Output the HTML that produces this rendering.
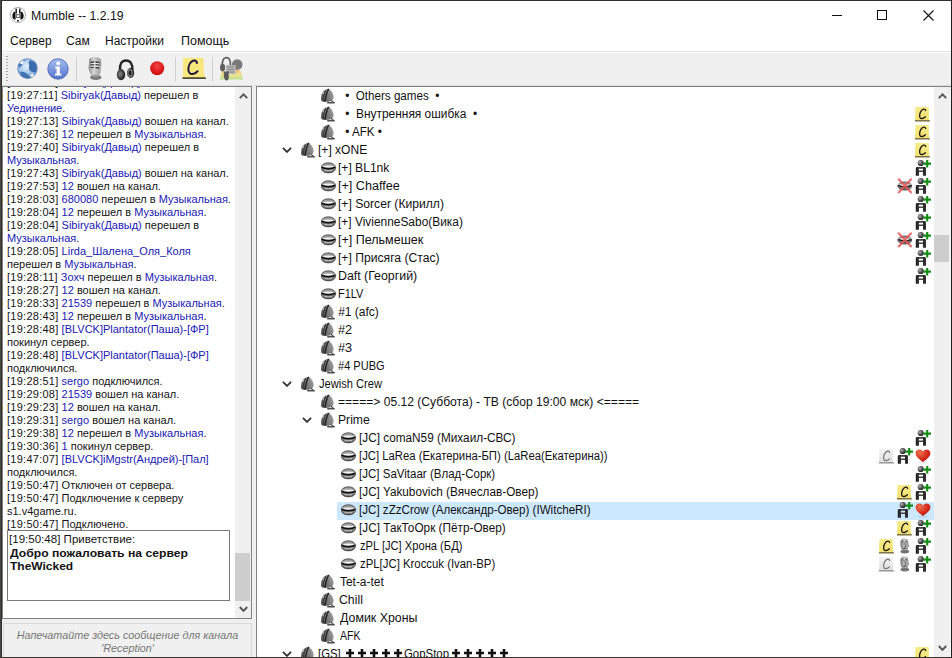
<!DOCTYPE html>
<html><head><meta charset="utf-8">
<style>
*{margin:0;padding:0;box-sizing:border-box}
html,body{width:952px;height:658px;overflow:hidden;background:#fff;font-family:"Liberation Sans",sans-serif;color:#000}
.a{position:absolute}
.i{position:absolute;overflow:visible}
.cl{position:absolute;left:7px;white-space:pre;font-size:11px;line-height:13px;color:#141414;transform-origin:0 0}
.ts{letter-spacing:0.26px}
.u{font-weight:normal;color:#2020b4}
.tt{position:absolute;white-space:pre;font-size:12px;line-height:18px;color:#111;transform-origin:0 0}
.hl{position:absolute;left:337px;width:597px;height:18px;background:#cce8ff}
.menu{position:absolute;top:31px;font-size:12px;line-height:20px;color:#111}
</style></head><body>

<svg width="0" height="0" style="position:absolute">
<defs>
 <linearGradient id="gch" x1="1" y1="0.3" x2="0" y2="0.8"><stop offset="0" stop-color="#a0a0a0"/><stop offset=".5" stop-color="#7a7a7a"/><stop offset="1" stop-color="#4e4e4e"/></linearGradient>
 <linearGradient id="glip" x1="0" y1="0" x2="0" y2="1"><stop offset="0" stop-color="#5a5a5a"/><stop offset=".3" stop-color="#a8a8a8"/><stop offset=".7" stop-color="#7a7a7a"/><stop offset="1" stop-color="#4a4a4a"/></linearGradient>
 <linearGradient id="gcy" x1="0" y1="0" x2="0" y2="1"><stop offset="0" stop-color="#f6ec8a"/><stop offset="1" stop-color="#f2e070"/></linearGradient>
 <linearGradient id="gcg" x1="0" y1="0" x2="0" y2="1"><stop offset="0" stop-color="#f2f2f2"/><stop offset="1" stop-color="#dedede"/></linearGradient>
 <radialGradient id="ghe" cx=".3" cy=".25" r=".9"><stop offset="0" stop-color="#f07050"/><stop offset=".6" stop-color="#d42a1a"/><stop offset="1" stop-color="#b01010"/></radialGradient>
 <radialGradient id="ghead" cx=".35" cy=".35" r=".7"><stop offset="0" stop-color="#b0b0b0"/><stop offset=".6" stop-color="#505050"/><stop offset="1" stop-color="#1a1a1a"/></radialGradient>
 <linearGradient id="gbody" x1="0" y1="0" x2="1" y2="0"><stop offset="0" stop-color="#1a1a1a"/><stop offset=".5" stop-color="#4a4a4a"/><stop offset="1" stop-color="#1a1a1a"/></linearGradient>
 <linearGradient id="gmo" x1="0" y1="0" x2="1" y2="0"><stop offset="0" stop-color="#707070"/><stop offset=".5" stop-color="#cacaca"/><stop offset="1" stop-color="#8a8a8a"/></linearGradient>
 <symbol id="ch" viewBox="0 0 16 16">
  <path d="M7.8 0.5 C10 2.5 12.4 5.5 12.6 8.4 C12.6 10.4 11.8 12 10.4 12.8 C8.4 13.8 5.6 14 3.6 13.9 C2 13.8 0.6 13.4 0.2 12.6 C-0.1 10 0.2 6.8 1.4 4.4 C3 2.2 5.6 0.8 7.8 0.5Z" fill="url(#gch)"/>
  <path d="M4.8 2.4 C3.2 5 2.4 8.6 2.2 12.8" stroke="#3c3c3c" stroke-width="1.1" fill="none"/>
  <path d="M7.6 1 C6 4 4.8 8 4 13.4" stroke="#1e1e1e" stroke-width="1.4" fill="none"/>
  <circle cx="2" cy="4.8" r="1.1" fill="#d8d8d8" opacity=".75"/>
  <path d="M10 12.2 L12.4 14.4" stroke="#5a5a5a" stroke-width="1.2"/>
  <rect x="6.2" y="13.9" width="7.6" height="1.6" fill="#505050"/>
 </symbol>
 <symbol id="lips" viewBox="0 0 16 16">
  <path d="M0 6.9 C0.6 3.6 3 1.8 7.4 1.8 C11.8 1.8 14.2 3.6 14.8 6.9 C14.2 10.2 11.8 11.9 7.4 11.9 C3 11.9 0.6 10.2 0 6.9Z" fill="url(#glip)" stroke="#444" stroke-width=".6"/>
  <path d="M2 5 Q7.4 3.9 12.8 5 Q12 6.6 7.4 6.6 Q2.8 6.6 2 5Z" fill="#f2f2f2"/>
  <path d="M0.3 6.5 Q2 6.3 3.4 7.3 Q7.4 8.2 11.4 7.3 Q12.8 6.3 14.5 6.5" stroke="#101010" stroke-width="1.5" fill="none"/>
  <path d="M3.6 9.6 Q7.4 10.2 11.2 9.6" stroke="#cfcfcf" stroke-width="1" fill="none"/>
  <path d="M3.8 3.3 Q7.4 2.8 11 3.3" stroke="#b4b4b4" stroke-width=".8" fill="none"/>
 </symbol>
 <symbol id="cy" viewBox="0 0 16 16">
  <path d="M0.4 0.9 H13.8 L14 13.4 L15 15.2 H0 Z" fill="url(#gcy)"/>
  <path d="M0 14 H14.4 L15.2 15.4 H0Z" fill="#7c7650"/>
  <path d="M10.6 4.6 C10.6 2.8 8.6 2.6 7 4 C5 5.8 4 9.6 5 11.6 C6 13.2 8.6 12.6 10.4 10.8" stroke="#231c14" stroke-width="1.35" fill="none" stroke-linecap="round"/>
 </symbol>
 <symbol id="cg" viewBox="0 0 16 16">
  <path d="M0.4 0.9 H13.8 L14 13.4 L15 15.2 H0 Z" fill="url(#gcg)"/>
  <path d="M0 14 H14.4 L15.2 15.4 H0Z" fill="#9a9a9a"/>
  <path d="M10.6 4.6 C10.6 2.8 8.6 2.6 7 4 C5 5.8 4 9.6 5 11.6 C6 13.2 8.6 12.6 10.4 10.8" stroke="#6e6e6e" stroke-width="1.1" fill="none" stroke-linecap="round"/>
 </symbol>
 <symbol id="au" viewBox="0 0 16 16">
  <circle cx="5.7" cy="3" r="3.1" fill="url(#ghead)"/>
  <path d="M0.8 15.8 V8.4 Q0.8 7 2.2 7 H9.4 Q10.9 7 10.9 8.4 V15.8 H8 V12 H4 V15.8Z M3.8 8.8 V10.6 H8 V8.8Z" fill="url(#gbody)" fill-rule="evenodd"/>
  <path d="M12.2 -0.2 V7.6 M8.4 3.6 H16" stroke="#128c12" stroke-width="2.1"/>
 </symbol>
 <symbol id="he" viewBox="0 0 16 16">
  <ellipse cx="8" cy="14.6" rx="5" ry="1.2" fill="#000" opacity=".08"/>
  <path d="M8 14 C5.2 11.6 0.6 9 0.6 5.2 C0.6 2.8 2.4 1.4 4.4 1.4 C6 1.4 7.2 2.2 8 3.4 C8.8 2.2 10 1.4 11.6 1.4 C13.6 1.4 15.4 2.8 15.4 5.2 C15.4 9 10.8 11.6 8 14Z" fill="url(#ghe)"/>
 </symbol>
 <symbol id="mo" viewBox="0 0 16 16">
  <path d="M3.4 3.4 Q4 0.8 7.4 0.6 Q10.6 0.6 11 2.6 L11.4 5 L12 8.6 L11 9.6 L10.8 12 H5 Q3.8 10.4 3.6 8Z" fill="url(#gmo)"/>
  <path d="M5.2 3.6 L6.6 4.2 M8.4 3.6 L10.6 4 M7.8 4.4 L8.6 9 L7 9.6 M5.8 10.6 H9.6" stroke="#555" stroke-width=".9" fill="none"/>
  <ellipse cx="7.8" cy="13.6" rx="4.4" ry="1.9" fill="#737373"/>
 </symbol>
 <symbol id="xl" viewBox="0 0 16 16">
  <ellipse cx="7.8" cy="8" rx="7.4" ry="4.6" fill="url(#glip)"/>
  <path d="M2.8 6.6 Q7.8 5.4 12.8 6.6 Q11.8 8.2 7.8 8.2 Q3.8 8.2 2.8 6.6Z" fill="#f2f2f2"/>
  <path d="M0.6 8 Q3 7.6 4.6 8.6 Q7.8 9.4 11 8.6 Q12.6 7.6 15 8" stroke="#0e0e0e" stroke-width="1.2" fill="none"/>
  <path d="M1.2 0.8 L14.6 15 M14.6 0.8 L1.2 15" stroke="#e85454" stroke-width="2.2" opacity=".85"/>
 </symbol>
 <symbol id="chev" viewBox="0 0 10 6">
  <path d="M0.9 0.8 L5 4.9 L9.1 0.8" stroke="#333" stroke-width="1.8" fill="none"/>
 </symbol>
 <symbol id="cross" viewBox="0 0 8 8">
  <path d="M4 0 V8 M0 4 H8" stroke="#111" stroke-width="2.6"/>
 </symbol>
</defs></svg>

<!-- window frame -->
<div class="a" style="left:0;top:0;width:952px;height:658px;border-top:1px solid #2b2b2b;border-left:2px solid #2b2b2b;border-right:1px solid #2b2b2b;border-bottom:1px solid #2b2b2b"></div>
<!-- title -->
<svg class="i" style="left:10px;top:7px" width="16" height="16" viewBox="0 0 16 16">
 <circle cx="8" cy="8" r="7.6" fill="#fff" stroke="#9a9a9a" stroke-width=".8"/>
 <path d="M2.6 11 Q2 7 3.6 5 L5.4 4.4 L5.6 12.8 Q3.6 12.6 2.6 11Z" fill="#111"/>
 <path d="M13.4 11 Q14 7 12.4 5 L10.6 4.4 L10.4 12.8 Q12.4 12.6 13.4 11Z" fill="#111"/>
 <path d="M5.4 1.6 L6.8 1.6 L7 6.6 L5.6 6.6Z M9.2 1.6 L10.6 1.6 L10.4 6.6 L9 6.6Z" fill="#111"/>
 <path d="M6.4 7.6 H9.8 V10.6 H6.4Z" fill="none" stroke="#333" stroke-width=".8"/>
 <path d="M7 13 H9 V14.4 H7Z" fill="#222"/>
</svg>
<div class="a" style="left:31px;top:9px;font-size:12px;line-height:15px;color:#111;transform:scaleX(1.02);transform-origin:0 0">Mumble -- 1.2.19</div>
<div class="a" style="left:832px;top:15px;width:10px;height:1px;background:#111"></div>
<div class="a" style="left:877px;top:10px;width:10px;height:10px;border:1px solid #111"></div>
<svg class="i" style="left:923px;top:10px" width="11" height="11"><path d="M0.5 0.5 L10.5 10.5 M10.5 0.5 L0.5 10.5" stroke="#111" stroke-width="1.1"/></svg>
<!-- menu -->
<div class="menu" style="left:10px">Сервер</div>
<div class="menu" style="left:66px">Сам</div>
<div class="menu" style="left:105px">Настройки</div>
<div class="menu" style="left:180.5px;transform:scaleX(1.04);transform-origin:0 0">Помощь</div>
<!-- toolbar -->
<div class="a" style="left:2px;top:51px;width:949px;height:35px;background:#f0f0f0;border-top:1px solid #e4e4e4;box-shadow:inset 0 1px 0 #fff"></div>
<div class="a" style="left:2px;top:85px;width:949px;height:1px;background:#dedede"></div>
<div class="a" style="left:6px;top:56px;width:2px;height:26px;background:repeating-linear-gradient(#a8a8a8 0 1px,transparent 1px 3px)"></div>
<div class="a" style="left:76px;top:57px;width:1px;height:24px;background:#cfcfcf"></div>
<div class="a" style="left:175px;top:57px;width:1px;height:24px;background:#cfcfcf"></div>
<div class="a" style="left:212px;top:57px;width:1px;height:24px;background:#cfcfcf"></div>

<svg class="i" style="left:17px;top:58px" width="21" height="21" viewBox="0 0 20.5 20.5">
 <defs><radialGradient id="gglobe" cx=".45" cy=".4" r=".65"><stop offset="0" stop-color="#e4f2ff"/><stop offset=".6" stop-color="#9cc0e6"/><stop offset="1" stop-color="#5a86c0"/></radialGradient></defs>
 <circle cx="10.2" cy="10.2" r="9.8" fill="url(#gglobe)"/>
 <path d="M12 2.5 Q16 2.2 19 6 Q20 10 18.5 13.5 Q15.5 14.5 12.5 12.5 Q11 10 12 7 Q11 4.5 12 2.5Z" fill="#3a6cae"/>
 <path d="M3 13.5 Q6 13 9 14.8 Q12 16.5 13 19.6 Q8.5 20.6 5 18.2 Q3 16 3 13.5Z" fill="#4072b2"/>
 <path d="M1 6.5 Q3 4.5 5.5 5.5 Q5 8.5 2.2 9.5 Q0.8 8.5 1 6.5Z" fill="#4a7cbc"/>
 <path d="M6 2 Q8.5 1 10 1.2 Q9 2.8 6.8 3.2Z" fill="#6a94c8"/>
 <circle cx="4.6" cy="4.4" r="1.5" fill="#fff" opacity=".95"/>
 <circle cx="15" cy="17" r="1.6" fill="#fff" opacity=".95"/>
 <circle cx="10.2" cy="10.2" r="9.6" fill="none" stroke="#5a7eb0" stroke-width=".7" opacity=".8"/>
</svg>
<svg class="i" style="left:47px;top:58px" width="22" height="22" viewBox="0 0 22 22">
 <defs><linearGradient id="ginfo" x1="0" y1="0" x2="0" y2="1"><stop offset="0" stop-color="#a6bef2"/><stop offset="1" stop-color="#5472cc"/></linearGradient></defs>
 <circle cx="11" cy="11" r="10.2" fill="url(#ginfo)" stroke="#4c66b6" stroke-width=".9"/>
 <circle cx="11.2" cy="5.4" r="1.9" fill="#fff"/>
 <path d="M8.2 8.6 H12.8 V15.8 H14.4 V17.6 H8 V15.8 H9.6 V10.4 H8.2Z" fill="#fff"/>
</svg>
<svg class="i" style="left:86px;top:56px" width="18" height="25" viewBox="0 0 18 25">
 <defs><linearGradient id="gmic" x1="0" y1="0" x2="1" y2="0"><stop offset="0" stop-color="#8a8a8a"/><stop offset=".4" stop-color="#d6d6d6"/><stop offset="1" stop-color="#9a9a9a"/></linearGradient></defs>
 <path d="M3 3.5 Q3.5 1 8.5 1 Q14 1.2 15 3.6 L15.4 8 L14.2 18 Q13 19.6 9 19.6 Q5 19.6 4.2 18 L2.4 12 L3 8Z" fill="url(#gmic)"/>
 <path d="M4.5 6.5 L8 6 M9.5 6 L13.5 6.6 M4.5 9 L8 8.6 M9.5 8.6 L13.5 9.2 M4.8 11.6 L8 11.2 M9.5 11.4 L13 12" stroke="#3a3a3a" stroke-width="1.3"/>
 <path d="M5.2 7.6 H13 M5.2 10.2 H13" stroke="#f4f4f4" stroke-width=".8"/>
 <ellipse cx="9.8" cy="21.4" rx="5.6" ry="2.6" fill="#7c7c7c"/>
 <path d="M7 19 H12.5 V21 H7Z" fill="#9a9a9a"/>
</svg>
<svg class="i" style="left:116px;top:59px" width="20" height="23" viewBox="0 0 20 23">
 <defs><radialGradient id="gcup" cx=".4" cy=".45" r=".6"><stop offset="0" stop-color="#8a8a8a"/><stop offset="1" stop-color="#141414"/></radialGradient></defs>
 <path d="M4 11 Q3.5 1.5 10 1.5 Q16.6 1.5 16.4 11" stroke="#262626" stroke-width="2.4" fill="none"/>
 <ellipse cx="5" cy="15.6" rx="4.2" ry="5.6" fill="url(#gcup)"/>
 <ellipse cx="14.6" cy="14" rx="3.6" ry="4.9" fill="#2a2a2a"/>
 <ellipse cx="14" cy="14" rx="2.6" ry="4" fill="#8a8a8a"/>
 <ellipse cx="14" cy="14" rx="1.5" ry="2.8" fill="#1e1e1e"/>
</svg>
<svg class="i" style="left:150px;top:61px" width="15" height="15" viewBox="0 0 15 15">
 <defs><radialGradient id="grec" cx=".5" cy=".35" r=".65"><stop offset="0" stop-color="#f04848"/><stop offset=".6" stop-color="#e01c1c"/><stop offset="1" stop-color="#c41010"/></radialGradient></defs>
 <circle cx="7.2" cy="7.3" r="7" fill="url(#grec)"/>
</svg>
<svg class="i" style="left:182px;top:57px" width="25" height="23" viewBox="0 0 25 23">
 <path d="M1.1 1 H21.5 L21.8 16 L24 21.6 H0.5 L1.1 16Z" fill="#f8e77c"/>
 <path d="M0.5 20.2 H23.4 L24.2 22 H0.5Z" fill="#4c4a38"/>
 <path d="M15 6 C14.6 3.6 12.6 3.2 11 3.8 C8 5 6.2 9 6.4 13 C6.6 16 8.6 17.2 10.4 17 C12.4 16.8 14.6 15.6 15.6 14.2" stroke="#1a1440" stroke-width="2" fill="none" stroke-linecap="round"/>
</svg>
<svg class="i" style="left:219px;top:56px" width="25" height="26" viewBox="0 0 25 26">
 <defs><linearGradient id="gmt" x1="0" y1="0" x2="0" y2="1"><stop offset="0" stop-color="#f0a060"/><stop offset=".6" stop-color="#ece080"/><stop offset="1" stop-color="#b0dc80"/></linearGradient></defs>
 <path d="M0.5 23.5 L3.5 13 L7 17 L12 19 L18 12 L22 16 L24 23.5Z" fill="url(#gmt)" opacity=".85"/>
 <circle cx="18.2" cy="8.5" r="5.3" fill="#7a7a7a"/>
 <path d="M3.4 11 Q2.6 2 7.2 1.6 Q11.6 1.4 11.4 9" stroke="#5a5a5a" stroke-width="1.6" fill="none"/>
 <ellipse cx="3.6" cy="11.6" rx="2.6" ry="3.8" fill="#5e5e5e"/>
 <rect x="7" y="9" width="9.6" height="9" fill="#b4b4b4"/>
 <path d="M8.6 11 H15 M8.6 13.5 H15 M8.6 16 H15" stroke="#8a8a8a" stroke-width="1"/>
 <path d="M5 15.4 Q4.4 19 5.2 22 Q6 24.6 7.6 24.6 Q9.6 24.4 9.8 21.6 L9.6 15.4Z" fill="#5a5a5a"/>
</svg>

<!-- chat panel -->
<div class="a" style="left:2px;top:86px;width:250px;height:533px;background:#fff;border:1px solid #828282;overflow:hidden">
</div>
<div class="a" style="left:3px;top:87px;width:232px;height:531px;overflow:hidden">
<div style="position:absolute;left:-3px;top:-87px;width:300px;height:700px">
<div class="cl" style="top:76px"><span class="ts">[19:27:05]</span> <b class="u">Sibiryak(Давыд)</b> вошел на канал.</div>
<div class="cl" style="top:89px"><span class="ts">[19:27:11]</span> <b class="u">Sibiryak(Давыд)</b> перешел в</div>
<div class="cl" style="top:102px"><b class="u">Уединение</b>.</div>
<div class="cl" style="top:115px"><span class="ts">[19:27:13]</span> <b class="u">Sibiryak(Давыд)</b> вошел на канал.</div>
<div class="cl" style="top:128px"><span class="ts">[19:27:36]</span> <b class="u">12</b> перешел в <b class="u">Музыкальная</b>.</div>
<div class="cl" style="top:141px"><span class="ts">[19:27:40]</span> <b class="u">Sibiryak(Давыд)</b> перешел в</div>
<div class="cl" style="top:154px"><b class="u">Музыкальная</b>.</div>
<div class="cl" style="top:167px"><span class="ts">[19:27:43]</span> <b class="u">Sibiryak(Давыд)</b> вошел на канал.</div>
<div class="cl" style="top:180px"><span class="ts">[19:27:53]</span> <b class="u">12</b> вошел на канал.</div>
<div class="cl" style="top:193px"><span class="ts">[19:28:03]</span> <b class="u">680080</b> перешел в <b class="u">Музыкальная</b>.</div>
<div class="cl" style="top:206px"><span class="ts">[19:28:04]</span> <b class="u">12</b> перешел в <b class="u">Музыкальная</b>.</div>
<div class="cl" style="top:219px"><span class="ts">[19:28:04]</span> <b class="u">Sibiryak(Давыд)</b> перешел в</div>
<div class="cl" style="top:232px"><b class="u">Музыкальная</b>.</div>
<div class="cl" style="top:245px"><span class="ts">[19:28:05]</span> <b class="u">Lirda_Шалена_Оля_Коля</b></div>
<div class="cl" style="top:258px">перешел в <b class="u">Музыкальная</b>.</div>
<div class="cl" style="top:271px"><span class="ts">[19:28:11]</span> <b class="u">Зохч</b> перешел в <b class="u">Музыкальная</b>.</div>
<div class="cl" style="top:284px"><span class="ts">[19:28:27]</span> <b class="u">12</b> вошел на канал.</div>
<div class="cl" style="top:297px"><span class="ts">[19:28:33]</span> <b class="u">21539</b> перешел в <b class="u">Музыкальная</b>.</div>
<div class="cl" style="top:310px"><span class="ts">[19:28:43]</span> <b class="u">12</b> перешел в <b class="u">Музыкальная</b>.</div>
<div class="cl" style="top:323px"><span class="ts">[19:28:48]</span> <b class="u">[BLVCK]Plantator(Паша)-[ФР]</b></div>
<div class="cl" style="top:336px">покинул сервер.</div>
<div class="cl" style="top:349px"><span class="ts">[19:28:48]</span> <b class="u">[BLVCK]Plantator(Паша)-[ФР]</b></div>
<div class="cl" style="top:362px">подключился.</div>
<div class="cl" style="top:375px"><span class="ts">[19:28:51]</span> <b class="u">sergo</b> подключился.</div>
<div class="cl" style="top:388px"><span class="ts">[19:29:08]</span> <b class="u">21539</b> вошел на канал.</div>
<div class="cl" style="top:401px"><span class="ts">[19:29:23]</span> <b class="u">12</b> вошел на канал.</div>
<div class="cl" style="top:414px"><span class="ts">[19:29:31]</span> <b class="u">sergo</b> вошел на канал.</div>
<div class="cl" style="top:427px"><span class="ts">[19:29:38]</span> <b class="u">12</b> перешел в <b class="u">Музыкальная</b>.</div>
<div class="cl" style="top:440px"><span class="ts">[19:30:36]</span> <b class="u">1</b> покинул сервер.</div>
<div class="cl" style="top:453px"><span class="ts">[19:47:07]</span> <b class="u">[BLVCK]iMgstr(Андрей)-[Пал]</b></div>
<div class="cl" style="top:466px">подключился.</div>
<div class="cl" style="top:479px"><span class="ts">[19:50:47]</span> Отключен от сервера.</div>
<div class="cl" style="top:492px"><span class="ts">[19:50:47]</span> Подключение к серверу</div>
<div class="cl" style="top:505px">s1.v4game.ru.</div>
<div class="cl" style="top:518px"><span class="ts">[19:50:47]</span> Подключено.</div>
<div class="a" style="left:7px;top:530px;width:223px;height:71px;border:1px solid #7a7a7a;background:#fff"></div>
<div class="cl" style="left:8.5px;top:533px;transform:scaleX(1.05)">[19:50:48] Приветствие:</div>
<div class="cl" style="left:10px;top:547px;font-weight:bold;transform:scaleX(1.105)">Добро пожаловать на сервер</div>
<div class="cl" style="left:10px;top:560px;font-weight:bold;transform:scaleX(1.09)">TheWicked</div>
</div></div>
<!-- chat scrollbar -->
<div class="a" style="left:235px;top:87px;width:16px;height:531px;background:#f0f0f0"></div>
<div class="a" style="left:235px;top:553px;width:15px;height:48px;background:#cdcdcd"></div>
<svg class="i" style="left:239px;top:93px" width="9" height="6"><path d="M0.8 5.2 L4.5 1.4 L8.2 5.2" stroke="#555" stroke-width="1.9" fill="none"/></svg>
<svg class="i" style="left:239px;top:606px" width="9" height="6"><path d="M0.8 1 L4.5 4.8 L8.2 1" stroke="#555" stroke-width="1.9" fill="none"/></svg>
<!-- input box -->
<div class="a" style="left:2px;top:619px;width:250px;height:38px;background:#f0f0f0"></div>
<div class="a" style="left:3px;top:623px;width:249px;height:35px;border:1px solid #d9d9d9;border-bottom:none;background:#f0f0f0"></div>
<div class="a" style="left:3px;top:629px;width:249px;text-align:center;font-size:11px;line-height:13px;font-style:italic;color:#777;transform:scaleX(0.98)">Напечатайте здесь сообщение для канала<br>'Reception'</div>
<!-- splitter -->
<div class="a" style="left:252px;top:86px;width:4px;height:571px;background:#f0f0f0"></div>
<!-- tree panel -->
<div class="a" style="left:256px;top:86px;width:695px;height:571px;background:#fff;border-left:1px solid #828282;border-top:1px solid #828282"></div>
<div class="a" style="left:257px;top:87px;width:677px;height:570px;overflow:hidden">
<div style="position:absolute;left:-257px;top:-87px;width:952px;height:700px">
<svg class="i" style="left:321px;top:88px" width="16" height="16"><use href="#ch"/></svg>
<div class="tt" style="left:341.62px;top:87px;transform:scaleX(0.9688)"> •  Others games  •</div>
<svg class="i" style="left:321px;top:106px" width="16" height="16"><use href="#ch"/></svg>
<div class="tt" style="left:341.53px;top:105px;transform:scaleX(0.9917)"> •  Внутренняя ошибка  •</div>
<svg class="i" style="left:915px;top:106px" width="16" height="16"><use href="#cy"/></svg>
<svg class="i" style="left:321px;top:124px" width="16" height="16"><use href="#ch"/></svg>
<div class="tt" style="left:341.62px;top:123px;transform:scaleX(0.9703)"> • AFK •</div>
<svg class="i" style="left:915px;top:124px" width="16" height="16"><use href="#cy"/></svg>
<svg class="i" style="left:282px;top:147px" width="10" height="6"><use href="#chev"/></svg>
<svg class="i" style="left:301px;top:142px" width="16" height="16"><use href="#ch"/></svg>
<div class="tt" style="left:318.40px;top:141px;transform:scaleX(1.0042)">[+] xONE</div>
<svg class="i" style="left:915px;top:142px" width="16" height="16"><use href="#cy"/></svg>
<svg class="i" style="left:321px;top:161px" width="16" height="16"><use href="#lips"/></svg>
<div class="tt" style="left:338.19px;top:159px;transform:scaleX(1.0060)">[+] BL1nk</div>
<svg class="i" style="left:915px;top:160px" width="16" height="16"><use href="#au"/></svg>
<svg class="i" style="left:321px;top:179px" width="16" height="16"><use href="#lips"/></svg>
<div class="tt" style="left:338.15px;top:177px;transform:scaleX(1.0491)">[+] Chaffee</div>
<svg class="i" style="left:897px;top:178px" width="16" height="16"><use href="#xl"/></svg>
<svg class="i" style="left:915px;top:178px" width="16" height="16"><use href="#au"/></svg>
<svg class="i" style="left:321px;top:197px" width="16" height="16"><use href="#lips"/></svg>
<div class="tt" style="left:338.19px;top:195px;transform:scaleX(1.0117)">[+] Sorcer (Кирилл)</div>
<svg class="i" style="left:915px;top:196px" width="16" height="16"><use href="#au"/></svg>
<svg class="i" style="left:321px;top:215px" width="16" height="16"><use href="#lips"/></svg>
<div class="tt" style="left:338.21px;top:213px;transform:scaleX(0.9935)">[+] VivienneSabo(Вика)</div>
<svg class="i" style="left:915px;top:214px" width="16" height="16"><use href="#au"/></svg>
<svg class="i" style="left:321px;top:233px" width="16" height="16"><use href="#lips"/></svg>
<div class="tt" style="left:338.16px;top:231px;transform:scaleX(1.0432)">[+] Пельмешек</div>
<svg class="i" style="left:897px;top:232px" width="16" height="16"><use href="#xl"/></svg>
<svg class="i" style="left:915px;top:232px" width="16" height="16"><use href="#au"/></svg>
<svg class="i" style="left:321px;top:251px" width="16" height="16"><use href="#lips"/></svg>
<div class="tt" style="left:338.19px;top:249px;transform:scaleX(1.0121)">[+] Присяга (Стас)</div>
<svg class="i" style="left:915px;top:250px" width="16" height="16"><use href="#au"/></svg>
<svg class="i" style="left:321px;top:269px" width="16" height="16"><use href="#lips"/></svg>
<div class="tt" style="left:338.17px;top:267px;transform:scaleX(1.0307)">Daft (Георгий)</div>
<svg class="i" style="left:915px;top:268px" width="16" height="16"><use href="#au"/></svg>
<svg class="i" style="left:321px;top:287px" width="16" height="16"><use href="#lips"/></svg>
<div class="tt" style="left:338.29px;top:285px;transform:scaleX(0.9148)">F1LV</div>
<svg class="i" style="left:321px;top:304px" width="16" height="16"><use href="#ch"/></svg>
<div class="tt" style="left:338.20px;top:303px">#1 (afc)</div>
<svg class="i" style="left:321px;top:322px" width="16" height="16"><use href="#ch"/></svg>
<div class="tt" style="left:338.14px;top:321px;transform:scaleX(1.0583)">#2</div>
<svg class="i" style="left:321px;top:340px" width="16" height="16"><use href="#ch"/></svg>
<div class="tt" style="left:338.14px;top:339px;transform:scaleX(1.0583)">#3</div>
<svg class="i" style="left:321px;top:358px" width="16" height="16"><use href="#ch"/></svg>
<div class="tt" style="left:338.28px;top:357px;transform:scaleX(0.9204)">#4 PUBG</div>
<svg class="i" style="left:282px;top:381px" width="10" height="6"><use href="#chev"/></svg>
<svg class="i" style="left:301px;top:376px" width="16" height="16"><use href="#ch"/></svg>
<div class="tt" style="left:319.40px;top:375px;transform:scaleX(0.9250)">Jewish Crew</div>
<svg class="i" style="left:321px;top:394px" width="16" height="16"><use href="#ch"/></svg>
<div class="tt" style="left:338.39px;top:393px;transform:scaleX(1.0074)">=====&gt; 05.12 (Суббота) - ТВ (сбор 19:00 мск) &lt;=====</div>
<svg class="i" style="left:302px;top:417px" width="10" height="6"><use href="#chev"/></svg>
<svg class="i" style="left:321px;top:412px" width="16" height="16"><use href="#ch"/></svg>
<div class="tt" style="left:338.39px;top:411px;transform:scaleX(1.0133)">Prime</div>
<svg class="i" style="left:341px;top:431px" width="16" height="16"><use href="#lips"/></svg>
<div class="tt" style="left:358.72px;top:429px;transform:scaleX(0.9829)">[JC] comaN59 (Михаил-СВС)</div>
<svg class="i" style="left:915px;top:430px" width="16" height="16"><use href="#au"/></svg>
<svg class="i" style="left:341px;top:449px" width="16" height="16"><use href="#lips"/></svg>
<div class="tt" style="left:358.76px;top:447px;transform:scaleX(0.9420)">[JC] LaRea (Екатерина-БП) (LaRea(Екатерина))</div>
<svg class="i" style="left:879px;top:448px" width="16" height="16"><use href="#cg"/></svg>
<svg class="i" style="left:897px;top:448px" width="16" height="16"><use href="#au"/></svg>
<svg class="i" style="left:915px;top:448px" width="16" height="16"><use href="#he"/></svg>
<svg class="i" style="left:341px;top:467px" width="16" height="16"><use href="#lips"/></svg>
<div class="tt" style="left:358.74px;top:465px;transform:scaleX(0.9607)">[JC] SaVitaar (Влад-Сорк)</div>
<svg class="i" style="left:915px;top:466px" width="16" height="16"><use href="#au"/></svg>
<svg class="i" style="left:341px;top:485px" width="16" height="16"><use href="#lips"/></svg>
<div class="tt" style="left:358.72px;top:483px;transform:scaleX(0.9791)">[JC] Yakubovich (Вячеслав-Овер)</div>
<svg class="i" style="left:897px;top:484px" width="16" height="16"><use href="#cy"/></svg>
<svg class="i" style="left:915px;top:484px" width="16" height="16"><use href="#au"/></svg>
<div class="hl" style="top:502px"></div>
<svg class="i" style="left:341px;top:503px" width="16" height="16"><use href="#lips"/></svg>
<div class="tt" style="left:358.73px;top:501px;transform:scaleX(0.9664)">[JC] zZzCrow (Александр-Овер) (IWitcheRI)</div>
<svg class="i" style="left:897px;top:502px" width="16" height="16"><use href="#au"/></svg>
<svg class="i" style="left:915px;top:502px" width="16" height="16"><use href="#he"/></svg>
<svg class="i" style="left:341px;top:521px" width="16" height="16"><use href="#lips"/></svg>
<div class="tt" style="left:358.72px;top:519px;transform:scaleX(0.9818)">[JC] ТакТоОрк (Пётр-Овер)</div>
<svg class="i" style="left:897px;top:520px" width="16" height="16"><use href="#cy"/></svg>
<svg class="i" style="left:915px;top:520px" width="16" height="16"><use href="#au"/></svg>
<svg class="i" style="left:341px;top:539px" width="16" height="16"><use href="#lips"/></svg>
<div class="tt" style="left:359.70px;top:537px;transform:scaleX(0.9291)">zPL [JC] Хрона (БД)</div>
<svg class="i" style="left:879px;top:538px" width="16" height="16"><use href="#cy"/></svg>
<svg class="i" style="left:897px;top:538px" width="16" height="16"><use href="#mo"/></svg>
<svg class="i" style="left:915px;top:538px" width="16" height="16"><use href="#au"/></svg>
<svg class="i" style="left:341px;top:557px" width="16" height="16"><use href="#lips"/></svg>
<div class="tt" style="left:359.70px;top:555px;transform:scaleX(0.9472)">zPL[JC] Kroccuk (Ivan-BP)</div>
<svg class="i" style="left:879px;top:556px" width="16" height="16"><use href="#cg"/></svg>
<svg class="i" style="left:897px;top:556px" width="16" height="16"><use href="#mo"/></svg>
<svg class="i" style="left:915px;top:556px" width="16" height="16"><use href="#au"/></svg>
<svg class="i" style="left:321px;top:574px" width="16" height="16"><use href="#ch"/></svg>
<div class="tt" style="left:339.60px;top:573px;transform:scaleX(0.9932)">Tet-a-tet</div>
<svg class="i" style="left:321px;top:592px" width="16" height="16"><use href="#ch"/></svg>
<div class="tt" style="left:338.58px;top:591px;transform:scaleX(1.0227)">Chill</div>
<svg class="i" style="left:321px;top:610px" width="16" height="16"><use href="#ch"/></svg>
<div class="tt" style="left:339.60px;top:609px;transform:scaleX(1.0311)">Домик Хроны</div>
<svg class="i" style="left:321px;top:628px" width="16" height="16"><use href="#ch"/></svg>
<div class="tt" style="left:339.60px;top:627px;transform:scaleX(0.8739)">AFK</div>
<svg class="i" style="left:282px;top:651px" width="10" height="6"><use href="#chev"/></svg>
<svg class="i" style="left:301px;top:646px" width="16" height="16"><use href="#ch"/></svg>
<div class="tt" style="left:318.45px;top:645px;transform:scaleX(0.9455)">[GS]</div>
<svg class="i" style="left:915px;top:646px" width="16" height="16"><use href="#cy"/></svg>
<svg class="i" style="left:346.2px;top:649px" width="8" height="8"><use href="#cross"/></svg>
<svg class="i" style="left:358.0px;top:649px" width="8" height="8"><use href="#cross"/></svg>
<svg class="i" style="left:369.8px;top:649px" width="8" height="8"><use href="#cross"/></svg>
<svg class="i" style="left:381.9px;top:649px" width="8" height="8"><use href="#cross"/></svg>
<svg class="i" style="left:394.0px;top:649px" width="8" height="8"><use href="#cross"/></svg>
<svg class="i" style="left:452.2px;top:649px" width="8" height="8"><use href="#cross"/></svg>
<svg class="i" style="left:463.8px;top:649px" width="8" height="8"><use href="#cross"/></svg>
<svg class="i" style="left:475.9px;top:649px" width="8" height="8"><use href="#cross"/></svg>
<svg class="i" style="left:487.9px;top:649px" width="8" height="8"><use href="#cross"/></svg>
<svg class="i" style="left:499.8px;top:649px" width="8" height="8"><use href="#cross"/></svg>
<div class="tt" style="left:404px;top:645px;transform:scaleX(0.95)">GopStop</div>
</div></div>
<!-- tree scrollbar -->
<div class="a" style="left:934px;top:87px;width:16px;height:570px;background:#f0f0f0"></div>
<div class="a" style="left:934px;top:235px;width:15px;height:27px;background:#cdcdcd"></div>
<svg class="i" style="left:938px;top:93px" width="9" height="6"><path d="M0.8 5.2 L4.5 1.4 L8.2 5.2" stroke="#555" stroke-width="1.9" fill="none"/></svg>
<svg class="i" style="left:938px;top:645px" width="9" height="6"><path d="M0.8 1 L4.5 4.8 L8.2 1" stroke="#555" stroke-width="1.9" fill="none"/></svg>
<!-- frame on top -->
<div class="a" style="left:950px;top:87px;width:1px;height:570px;background:#f6f6f8"></div>
<div class="a" style="left:0;top:0;width:952px;height:1px;background:#303030"></div>
<div class="a" style="left:0;top:0;width:1px;height:658px;background:#4a4843"></div>
<div class="a" style="left:1px;top:1px;width:1px;height:657px;background:#2f2e29"></div>
<div class="a" style="left:951px;top:0;width:1px;height:658px;background:#1d1d1f"></div>
<div class="a" style="left:0;top:657px;width:952px;height:1px;background:#38362f"></div>
</body></html>
